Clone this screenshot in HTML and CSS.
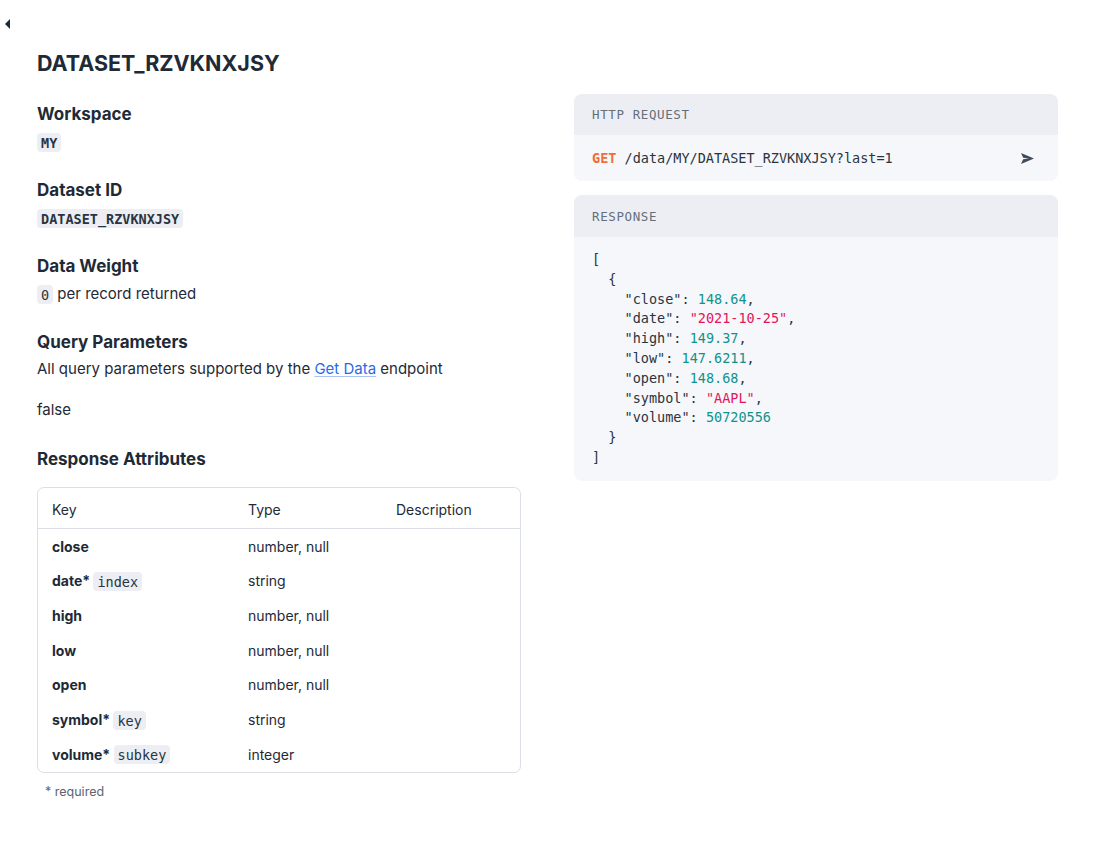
FILE: index.html
```html
<!DOCTYPE html>
<html lang="en">
<head>
<meta charset="utf-8">
<title>DATASET_RZVKNXJSY</title>
<link rel="stylesheet" href="styles.css">
</head>
<body>
<div class="topbar">
  <button class="collapse" aria-label="Collapse">
    <svg width="6" height="10" viewBox="0 0 6 10"><polygon points="5,0 5,10 0,5" fill="#1e2a36"/></svg>
  </button>
</div>
<main class="page">
  <h1 class="title">DATASET_RZVKNXJSY</h1>
  <div class="columns">
    <div class="left">
      <section class="field">
        <h2 class="field-title">Workspace</h2>
        <div class="field-body"><code class="chip chip-strong">MY</code></div>
      </section>
      <section class="field">
        <h2 class="field-title">Dataset ID</h2>
        <div class="field-body"><code class="chip chip-strong">DATASET_RZVKNXJSY</code></div>
      </section>
      <section class="field">
        <h2 class="field-title">Data Weight</h2>
        <div class="field-body"><code class="chip">0</code> per record returned</div>
      </section>
      <section class="field">
        <h2 class="field-title">Query Parameters</h2>
        <div class="field-body tight">All query parameters supported by the <a class="link" href="#">Get Data</a> endpoint</div>
        <div class="field-body plain">false</div>
      </section>
      <section class="field attrs">
        <h2 class="field-title">Response Attributes</h2>
        <div class="table-wrap">
          <table class="attr-table">
            <thead>
              <tr><th class="c-key">Key</th><th class="c-type">Type</th><th>Description</th></tr>
            </thead>
            <tbody>
              <tr><td class="key">close</td><td>number, null</td><td></td></tr>
              <tr><td class="key">date* <code class="chip">index</code></td><td>string</td><td></td></tr>
              <tr><td class="key">high</td><td>number, null</td><td></td></tr>
              <tr><td class="key">low</td><td>number, null</td><td></td></tr>
              <tr><td class="key">open</td><td>number, null</td><td></td></tr>
              <tr><td class="key">symbol* <code class="chip">key</code></td><td>string</td><td></td></tr>
              <tr><td class="key">volume* <code class="chip">subkey</code></td><td>integer</td><td></td></tr>
            </tbody>
          </table>
        </div>
        <p class="note">* required</p>
      </section>
    </div>
    <div class="right">
      <div class="card">
        <div class="card-head">HTTP REQUEST</div>
        <div class="card-body request">
          <span class="req"><span class="method">GET</span> /data/MY/DATASET_RZVKNXJSY?last=1</span>
          <svg class="send" width="13" height="11" viewBox="0 0 13 11"><path d="M0 0 L13 5.5 L0 11 L2.2 6.3 L8 5.5 L2.2 4.7 Z" fill="#3f4b58"/></svg>
        </div>
      </div>
      <div class="card">
        <div class="card-head">RESPONSE</div>
        <div class="card-body json">
          <div class="ln">[</div>
          <div class="ln i1">{</div>
          <div class="ln i2">"close": <span class="num">148.64</span>,</div>
          <div class="ln i2">"date": <span class="str">"2021-10-25"</span>,</div>
          <div class="ln i2">"high": <span class="num">149.37</span>,</div>
          <div class="ln i2">"low": <span class="num">147.6211</span>,</div>
          <div class="ln i2">"open": <span class="num">148.68</span>,</div>
          <div class="ln i2">"symbol": <span class="str">"AAPL"</span>,</div>
          <div class="ln i2">"volume": <span class="num">50720556</span></div>
          <div class="ln i1">}</div>
          <div class="ln">]</div>
        </div>
      </div>
    </div>
  </div>
</main>
</body>
</html>
```

FILE: styles.css
```css
* { box-sizing: border-box; }
html, body { margin: 0; padding: 0; background: #ffffff; }
body {
  font-family: "Inter", "Liberation Sans", sans-serif;
  color: #1e2a36;
  font-size: 15px;
}
.topbar { height: 44px; display: flex; align-items: center; padding: 4px 0 0 4px; }
.collapse { border: 0; background: transparent; padding: 0; width: 8px; height: 12px; display: flex; align-items: center; justify-content: center; cursor: pointer; }
.page { padding: 0 37px; }
.title { margin: 3px 0 15px; font-size: 21.5px; line-height: 32px; font-weight: 700; letter-spacing: 0; }
.columns { display: grid; grid-template-columns: 484px 484px; column-gap: 53px; align-items: start; }
.left { padding-top: 8px; }
.field { margin-bottom: 24px; }
.field.attrs { margin-top: 25px; }
.field-title { margin: 0; font-size: 17px; line-height: 24px; font-weight: 700; }
.field-body { margin-top: 4px; line-height: 24px; }
.field-body.tight { margin-top: 3px; }
.field-body.plain { margin-top: 17px; }
.chip {
  font-family: "DejaVu Sans Mono", "Liberation Mono", monospace;
  font-size: 13.5px;
  background: #eceef3;
  border-radius: 4px;
  padding: 1.5px 4px;
  line-height: 15px;
  color: #2a3440;
}
.chip-strong { font-weight: 700; }
.link { color: #2a6ae9; text-decoration: underline; text-decoration-color: #a9c3f5; text-underline-offset: 2px; }
.attrs .table-wrap { margin-top: 16px; }
.table-wrap { border: 1px solid #dcdfe6; border-radius: 7px; overflow: hidden; }
.attr-table { width: 100%; border-collapse: separate; border-spacing: 0; font-size: 14px; }
.attr-table th { text-align: left; font-weight: 400; height: 41px; padding: 2px 14px 0; border-bottom: 1px solid #dcdfe6; }
.attr-table .c-key { width: 196px; }
.attr-table .c-type { width: 148px; }
.attr-table td { height: 34.67px; padding: 0 14px; vertical-align: middle; }
.attr-table td.key { font-weight: 700; }
.attr-table td .chip { font-weight: 400; }
.note { margin: 10px 0 0 8px; font-size: 12.5px; line-height: 18px; color: #5b6672; }
.card { border-radius: 8px; overflow: hidden; background: #f6f7fa; margin-bottom: 14px; }
.card-head {
  background: #edeef3;
  height: 41px;
  display: flex; align-items: center;
  padding: 0 18px;
  font-family: "DejaVu Sans Mono", "Liberation Mono", monospace;
  font-size: 12.5px;
  font-weight: 500;
  color: #646e7a;
  letter-spacing: 0.6px;
}
.card + .card .card-head { height: 42px; }
.card-body { padding: 0 18px; }
.request { height: 46px; display: flex; align-items: center; justify-content: space-between; padding-right: 24px; }
.req { font-family: "DejaVu Sans Mono", "Liberation Mono", monospace; font-size: 13.5px; color: #2a3440; }
.method { color: #f26c3a; font-weight: 700; }
.send { display: block; }
.json {
  padding: 13px 18px 13px;
  font-family: "DejaVu Sans Mono", "Liberation Mono", monospace;
  font-size: 13.5px;
  color: #2a3440;
}
.ln { height: 19.8px; line-height: 19.8px; white-space: pre; }
.i1 { padding-left: 16.3px; }
.i2 { padding-left: 32.6px; }
.num { color: #11928a; }
.str { color: #e3155a; }
```
